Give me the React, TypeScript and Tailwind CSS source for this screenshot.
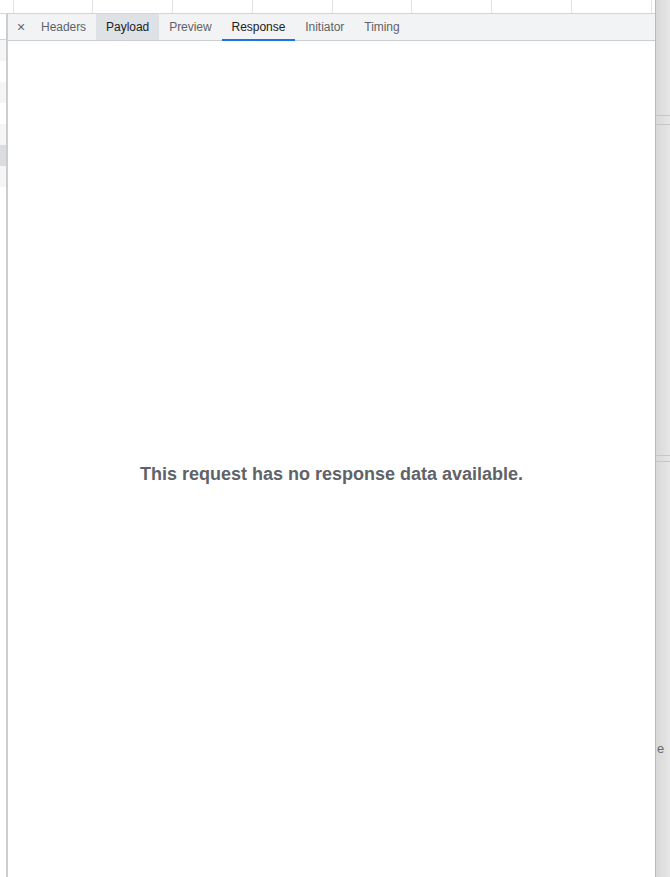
const tabs = [
  { label: 'Headers', active: false, hover: false },
  { label: 'Payload', active: false, hover: true },
  { label: 'Preview', active: false, hover: false },
  { label: 'Response', active: true, hover: false },
  { label: 'Initiator', active: false, hover: false },
  { label: 'Timing', active: false, hover: false },
];

const columns = [79, 80, 80, 80, 79, 80, 80, 80];

const leftRows = ['bg-[#f5f5f5]', 'bg-white', 'bg-[#f5f5f5]', 'bg-white', 'bg-[#f5f5f5]', 'bg-[#dadce0]', 'bg-[#f5f5f5]'];

const App = () => {
  return (
    <div className="w-[670px] h-[877px] flex overflow-hidden bg-white font-['Liberation_Sans',Arial,sans-serif]">
      {/* main area */}
      <div className="flex-1 flex flex-col min-w-0">
        {/* partial request table header peeking above the drawer */}
        <div className="h-[14px] flex border-b border-[#d3d5d9] shrink-0">
          <div className="w-[14px] border-r border-[#e3e3e3]" />
          {columns.map((w, i) => (
            <div key={i} style={{ width: w }} className="border-r border-[#e3e3e3]" />
          ))}
          <div className="flex-1" />
        </div>

        <div className="flex-1 flex min-h-0">
          {/* request list strip */}
          <div className="w-[6px] flex flex-col shrink-0">
            <div className="h-[26px] border-b border-[#d3d5d9] bg-white shrink-0" />
            {leftRows.map((c, i) => (
              <div key={i} className={`h-[21px] shrink-0 ${c}`} />
            ))}
            <div className="flex-1 bg-white" />
          </div>
          <div className="w-[2px] bg-[#cbcdd1] shrink-0" />

          {/* details panel */}
          <div className="flex-1 flex flex-col min-w-0">
            <div className="h-[27px] flex items-stretch bg-[#f1f3f4] border-b border-[#cbcdd1] shrink-0">
              <div className="w-[23px] flex items-center justify-center text-[14px] text-[#5f6368] pl-[3px]">×</div>
              {tabs.map((t) => (
                <div
                  key={t.label}
                  className={`relative px-[10px] flex items-center text-[12px] tracking-[-0.04px] ${
                    t.hover ? 'bg-[#dee1e6] text-[#202124]' : ''
                  } ${t.active ? 'text-[#202124]' : ''} ${!t.hover && !t.active ? 'text-[#5f6368]' : ''}`}
                >
                  {t.label}
                  {t.active && <div className="absolute left-0 right-0 -bottom-px h-[2px] bg-[#1a73e8]" />}
                </div>
              ))}
            </div>
            <div className="flex-1 flex items-center justify-center pt-[30px]">
              <p className="text-[18px] font-bold text-[#5f6368]">This request has no response data available.</p>
            </div>
          </div>
        </div>
      </div>

      {/* window edge / scrollbar strip */}
      <div className="w-[15px] shrink-0 flex flex-col border-l border-[#b9b9b9] bg-gradient-to-r from-[#d8d8d8] to-[#e6e6e6] overflow-hidden">
        <div className="h-[115px] shrink-0" />
        <div className="h-px bg-[#c6c6c6] shrink-0" />
        <div className="h-[8px] shrink-0" />
        <div className="h-px bg-[#c6c6c6] shrink-0" />
        <div className="h-[330px] shrink-0" />
        <div className="h-px bg-[#c6c6c6] shrink-0" />
        <div className="h-[5px] shrink-0" />
        <div className="h-px bg-[#c6c6c6] shrink-0" />
        <div className="h-[280px] shrink-0" />
        <div className="text-[13px] leading-none text-[#6b6b6b] pl-[1px]">e</div>
      </div>
    </div>
  );
};

export default App;
